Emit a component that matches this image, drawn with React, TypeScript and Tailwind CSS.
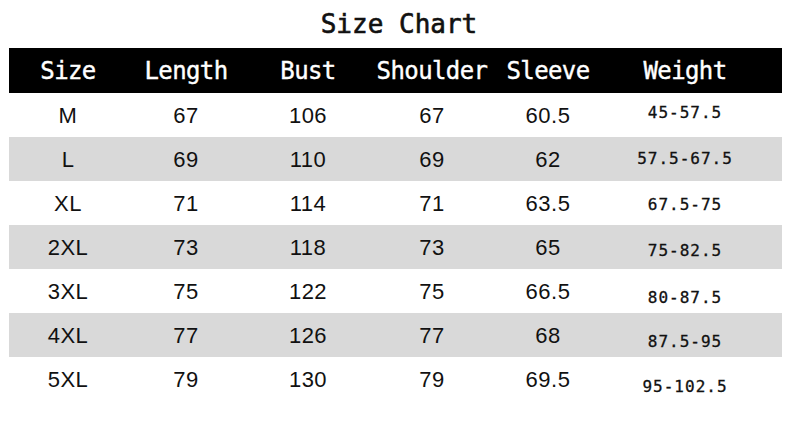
const HEADERS = ['Size', 'Length', 'Bust', 'Shoulder', 'Sleeve', 'Weight']

// weight column sits a little lower on each row in the original, hence the per-row shift
const ROWS: { cells: string[]; gray: boolean; shift: string }[] = [
  { cells: ['M', '67', '106', '67', '60.5', '45-57.5'], gray: false, shift: '-translate-y-[2px]' },
  { cells: ['L', '69', '110', '69', '62', '57.5-67.5'], gray: true, shift: 'translate-y-0' },
  { cells: ['XL', '71', '114', '71', '63.5', '67.5-75'], gray: false, shift: 'translate-y-[2px]' },
  { cells: ['2XL', '73', '118', '73', '65', '75-82.5'], gray: true, shift: 'translate-y-[4px]' },
  { cells: ['3XL', '75', '122', '75', '66.5', '80-87.5'], gray: false, shift: 'translate-y-[7px]' },
  { cells: ['4XL', '77', '126', '77', '68', '87.5-95'], gray: true, shift: 'translate-y-[7px]' },
  { cells: ['5XL', '79', '130', '79', '69.5', '95-102.5'], gray: false, shift: 'translate-y-[8px]' },
]

const COLS = 'grid grid-cols-[118px_118px_126px_122px_110px_164px] pr-[15px]'
const MONO = "font-['DejaVu_Sans_Mono','Liberation_Mono',monospace]"
const SANS = "font-['Liberation_Sans',Arial,sans-serif]"

export default function App() {
  return (
    <div className="w-[790px] h-[441px] bg-white overflow-hidden">
      <h1 className={`${MONO} h-[48px] leading-[48px] text-center text-[26px] text-[#111] pl-[8px] [-webkit-text-stroke:0.6px_#111]`}>
        Size Chart
      </h1>

      <div className="ml-[9px] w-[773px]">
        <div className={`${COLS} ${MONO} h-[45px] bg-black text-white text-[24px] tracking-[-0.6px] items-center [-webkit-text-stroke:0.4px_white]`}>
          {HEADERS.map((h) => (
            <div key={h} className="text-center">{h}</div>
          ))}
        </div>

        {ROWS.map(({ cells, gray, shift }) => (
          <div
            key={cells[0]}
            className={`${COLS} h-[44px] items-center text-[#111] ${gray ? 'bg-[#d9d9d9]' : 'bg-white'}`}
          >
            {cells.slice(0, 5).map((c, i) => (
              <div key={i} className={`${SANS} text-center text-[22px] tracking-[0.5px]`}>{c}</div>
            ))}
            <div className={`${MONO} text-center text-[16px] tracking-[1px] [-webkit-text-stroke:0.3px_#111] ${shift}`}>{cells[5]}</div>
          </div>
        ))}
      </div>
    </div>
  )
}
